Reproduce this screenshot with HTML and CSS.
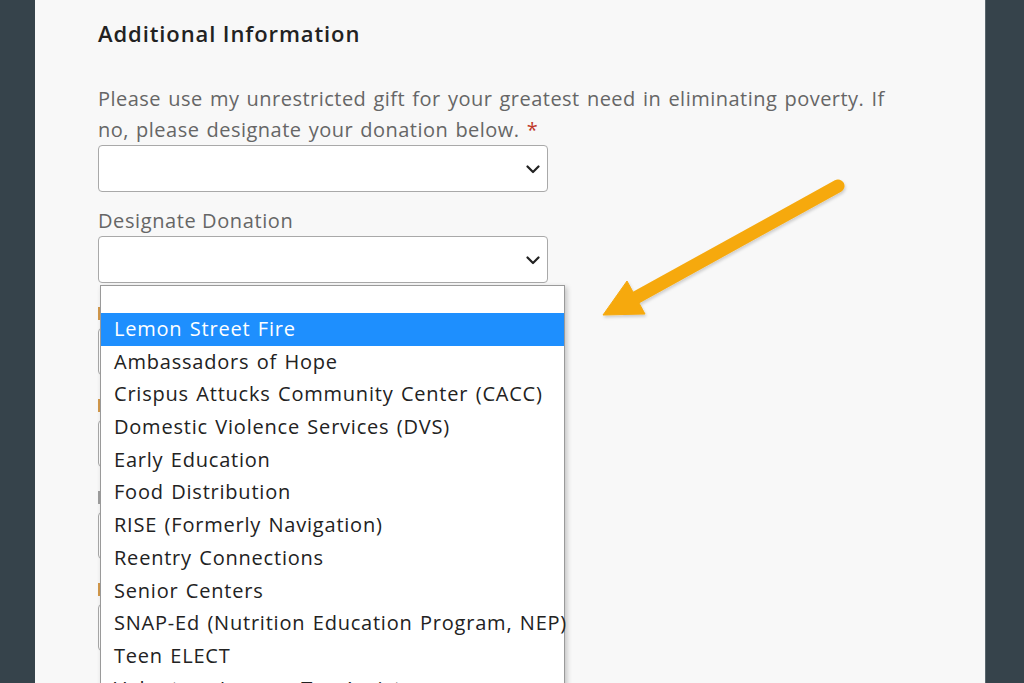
FILE: index.html
```html
<!DOCTYPE html>
<html>
<head>
<meta charset="utf-8">
<link rel="stylesheet" href="styles.css">
</head>
<body>
<div class="side side-left"></div>
<main class="page">
  <form class="form">
    <h2 class="heading">Additional Information</h2>
    <p class="question">Please use my unrestricted gift for your greatest need in eliminating poverty. If no, please designate your donation below. <span class="req">*</span></p>
    <div class="select">
      <svg class="chev" width="14" height="9" viewBox="0 0 14 9"><path d="M1.5 1.5 L7 7 L12.5 1.5" fill="none" stroke="#222" stroke-width="2.2" stroke-linecap="round" stroke-linejoin="round"/></svg>
    </div>
    <label class="label">Designate Donation</label>
    <div class="select-wrap">
      <div class="select">
        <svg class="chev" width="14" height="9" viewBox="0 0 14 9"><path d="M1.5 1.5 L7 7 L12.5 1.5" fill="none" stroke="#222" stroke-width="2.2" stroke-linecap="round" stroke-linejoin="round"/></svg>
      </div>
      <ul class="dropdown">
        <li class="opt empty"></li>
        <li class="opt active">Lemon Street Fire</li>
        <li class="opt">Ambassadors of Hope</li>
        <li class="opt">Crispus Attucks Community Center (CACC)</li>
        <li class="opt">Domestic Violence Services (DVS)</li>
        <li class="opt">Early Education</li>
        <li class="opt">Food Distribution</li>
        <li class="opt">RISE (Formerly Navigation)</li>
        <li class="opt">Reentry Connections</li>
        <li class="opt">Senior Centers</li>
        <li class="opt">SNAP-Ed (Nutrition Education Program, NEP)</li>
        <li class="opt">Teen ELECT</li>
        <li class="opt">Volunteer Income Tax Assistance</li>
      </ul>
    </div>
    <div class="group"><span class="glabel"></span><div class="input"></div></div>
    <div class="group"><span class="glabel"></span><div class="input"></div></div>
    <div class="group"><span class="glabel gray"></span><div class="input"></div></div>
    <div class="group"><span class="glabel"></span><div class="input"></div></div>
  </form>
  <svg class="arrow" width="260" height="160" viewBox="590 170 260 160">
    <defs>
      <filter id="sh" x="-20%" y="-20%" width="140%" height="140%">
        <feDropShadow dx="1" dy="2" stdDeviation="1.5" flood-color="#000" flood-opacity="0.18"/>
      </filter>
    </defs>
    <g filter="url(#sh)" fill="#f6a90c" stroke="#f6a90c">
      <line x1="838" y1="186" x2="628" y2="302" stroke-width="13" stroke-linecap="round"/>
      <polygon points="603,315 627,281 645,314" stroke-width="1" stroke-linejoin="round"/>
    </g>
  </svg>
</main>
<div class="side side-right"></div>
</body>
</html>
```

FILE: styles.css
```css
html, body {
  margin: 0;
  padding: 0;
  height: 683px;
  overflow: hidden;
}
body {
  display: grid;
  grid-template-columns: 35px 1fr 39px;
  background: #36434b;
  font-family: "Open Sans", "Noto Sans", sans-serif;
}
.side { background: #36434b; }
.side-right { border-left: 1px solid #5a676e; }
.page {
  position: relative;
  background: #f8f8f8;
  height: 683px;
  overflow: hidden;
}
.form {
  padding: 17px 0 0 63px;
  width: 800px;
}
.heading {
  margin: 0;
  font-size: 22px;
  font-weight: 600;
  color: #222;
  letter-spacing: 0.9px;
  line-height: 32px;
}
.question {
  margin: 35px 0 0 0;
  font-size: 20px;
  line-height: 30.5px;
  color: #666;
  letter-spacing: 0.48px;
  word-spacing: 1.5px;
}
.req { color: #c0392b; }
.select {
  position: relative;
  width: 448px;
  height: 45px;
  border: 1px solid #a9a9a9;
  border-radius: 4px;
  background: #fff;
}
.chev {
  position: absolute;
  right: 7px;
  top: 19px;
}
.label {
  display: block;
  margin-top: 16px;
  font-size: 20px;
  line-height: 26px;
  color: #666;
  letter-spacing: 0.6px;
}
.select-wrap {
  position: relative;
  margin-top: 2px;
}
.dropdown {
  position: absolute;
  z-index: 5;
  left: 2px;
  top: 49px;
  width: 463px;
  margin: 0;
  padding: 0;
  list-style: none;
  background: #fff;
  border: 1px solid #9a9a9a;
  box-shadow: 2px 2px 5px rgba(0,0,0,0.22);
}
.opt {
  height: 32.7px;
  line-height: 32.7px;
  padding-left: 13px;
  font-size: 20px;
  color: #222;
  letter-spacing: 0.78px;
  word-spacing: 1.5px;
  white-space: nowrap;
}
.opt.empty { height: 27px; }
.opt.active {
  background: #1e8ffe;
  color: #fff;
}
.group {
  display: flex;
  flex-direction: column;
  gap: 8px;
  margin-top: 24px;
}
.group:first-of-type { margin-top: 20px; }
.glabel {
  display: block;
  width: 60px;
  height: 13px;
  background: #d49a4c;
}
.glabel.gray { background: #a0a0a0; }
.input {
  width: 448px;
  height: 45px;
  border: 1px solid #a9a9a9;
  border-radius: 4px;
  background: #fff;
}
.arrow {
  position: absolute;
  left: 555px;
  top: 170px;
}
```
